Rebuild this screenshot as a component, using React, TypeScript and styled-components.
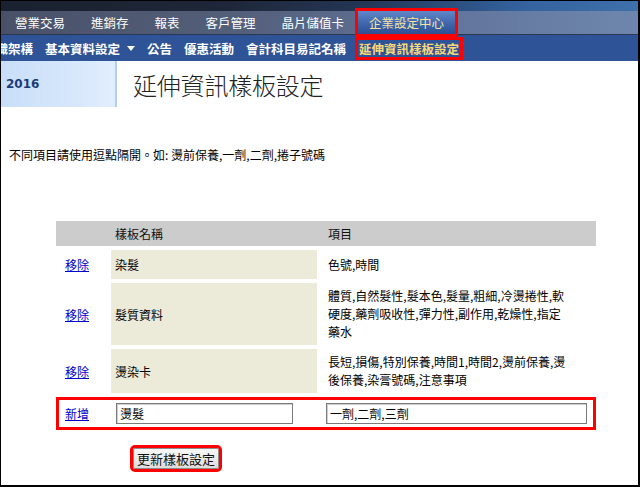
import styled, { createGlobalStyle } from "styled-components";

const GlobalStyle = createGlobalStyle`
  html, body {
    margin: 0;
    padding: 0;
    background: #fff;
  }
  body {
    font-family: "Noto Sans CJK TC", "Noto Sans", sans-serif;
    font-size: 12px;
    color: #000;
  }
`;

const mainMenu = ["營業交易", "進銷存", "報表", "客戶管理", "晶片儲值卡", "企業設定中心"];

const subMenu = [
  { label: "組織架構" },
  { label: "基本資料設定", caret: true },
  { label: "公告" },
  { label: "優惠活動" },
  { label: "會計科目易記名稱" },
  { label: "延伸資訊樣板設定", active: true },
];

const templates = [
  { name: "染髮", items: ["色號,時間"], height: 29 },
  {
    name: "髮質資料",
    items: [
      "體質,自然髮性,髮本色,髮量,粗細,冷燙捲性,軟",
      "硬度,藥劑吸收性,彈力性,副作用,乾燥性,指定",
      "藥水",
    ],
    height: 61,
  },
  {
    name: "燙染卡",
    items: ["長短,損傷,特別保養,時間1,時間2,燙前保養,燙", "後保養,染膏號碼,注意事項"],
    height: 44,
  },
];

const App = () => {
  return (
    <>
      <GlobalStyle />
      <Page>
        <TopStrip />
        <MainMenu>
          {mainMenu.map((m, i) => (
            <MenuItem key={m} $active={i === mainMenu.length - 1}>
              {m}
            </MenuItem>
          ))}
        </MainMenu>
        <SubMenu>
          {subMenu.map((s, i) => (
            <SubItem key={s.label} $active={s.active} $first={i === 0}>
              {s.label}
              {s.caret && (
                <Caret width="8" height="5" viewBox="0 0 8 5">
                  <polygon points="0,0 8,0 4,5" fill="#fff" />
                </Caret>
              )}
            </SubItem>
          ))}
        </SubMenu>

        <TitleRow>
          <YearBox>2016</YearBox>
          <Title>延伸資訊樣板設定</Title>
        </TitleRow>

        <Hint>不同項目請使用逗點隔開。如: 燙前保養,一劑,二劑,捲子號碼</Hint>

        <Table>
          <HeaderRow>
            <span />
            <HeadCell $pad={4}>樣板名稱</HeadCell>
            <HeadCell $pad={11}>項目</HeadCell>
          </HeaderRow>
          {templates.map((t) => (
            <Row key={t.name} $h={t.height}>
              <LinkCell>
                <TextLink href="#">移除</TextLink>
              </LinkCell>
              <NameCell>{t.name}</NameCell>
              <ItemsCell>
                <div>
                  {t.items.map((line, i) => (
                    <div key={i}>{line}</div>
                  ))}
                </div>
              </ItemsCell>
            </Row>
          ))}
          <NewRow>
            <LinkCell>
              <TextLink href="#">新增</TextLink>
            </LinkCell>
            <TextInput defaultValue="燙髮" $w={177} $ml={5} />
            <TextInput defaultValue="一劑,二劑,三劑" $w={261} $ml={9} />
          </NewRow>
        </Table>

        <ButtonRow>
          <UpdateButton type="button">更新樣板設定</UpdateButton>
        </ButtonRow>
      </Page>
    </>
  );
};

const Page = styled.div`
  width: 640px;
  height: 487px;
  box-sizing: border-box;
  border: 1px solid #000;
  border-right-width: 2px;
  border-bottom-width: 2px;
  overflow: hidden;
  background: #fff;
`;

const TopStrip = styled.div`
  height: 10px;
  background: linear-gradient(
    90deg,
    #1a2130 0%,
    #1e2739 35%,
    #243757 58%,
    #3463a0 82%,
    #3f70ab 100%
  );
`;

const MainMenu = styled.nav`
  display: flex;
  height: 23px;
  padding-left: 1px;
  border-bottom: 1px solid #2c3752;
  background: linear-gradient(
    90deg,
    #495168 0%,
    #535e78 35%,
    #61749a 68%,
    #6e86ad 100%
  );
`;

const MenuItem = styled.a<{ $active?: boolean }>`
  display: flex;
  align-items: center;
  padding: 0 13px;
  color: ${(p) => (p.$active ? "#f4e4a4" : "#fff")};
  font-size: 12.5px;
  white-space: nowrap;
  ${(p) =>
    p.$active &&
    `
    margin-left: 1px;
    padding: 0 11px;
    background: linear-gradient(180deg, #5e86c8 0%, #4169ad 50%, #2d4f94 100%);
    outline: 3px solid #ff0000;
  `}
`;

const SubMenu = styled.nav`
  display: flex;
  align-items: center;
  gap: 12px;
  height: 26px;
  background: #2e5396;
  white-space: nowrap;
`;

const SubItem = styled.a<{ $active?: boolean; $first?: boolean }>`
  display: inline-flex;
  align-items: center;
  height: 17px;
  font-size: 12.5px;
  font-weight: bold;
  color: ${(p) => (p.$active ? "#f6d77a" : "#fff")};
  margin-left: ${(p) => (p.$first ? "-18px" : "0")};
  ${(p) =>
    p.$active &&
    `
    padding: 0 1px;
    outline: 3px solid #ff0000;
  `}
`;

const Caret = styled.svg`
  margin-left: 7px;
  margin-top: 1px;
`;

const TitleRow = styled.div`
  display: flex;
  align-items: center;
  height: 46px;
`;

const YearBox = styled.div`
  box-sizing: border-box;
  width: 116px;
  height: 100%;
  display: flex;
  align-items: center;
  padding-left: 5px;
  border-right: 2px solid #b6cfee;
  background: linear-gradient(90deg, #c8def8 0%, #d6e7fb 60%, #e1eefd 100%);
  font-family: "DejaVu Sans", Verdana, sans-serif;
  font-weight: bold;
  font-size: 12px;
  color: #1b3a7c;
`;

const Title = styled.h1`
  margin: 0 0 0 16px;
  font-size: 24px;
  font-weight: 300;
  color: #222;
  letter-spacing: -0.2px;
`;

const Hint = styled.p`
  margin: 39px 0 0;
  padding-left: 8px;
  line-height: 18px;
  font-size: 12px;
`;

const Table = styled.div`
  display: flex;
  flex-direction: column;
  gap: 4px;
  width: 540px;
  margin: 57px 0 0 55px;
`;

const grid = `
  display: grid;
  grid-template-columns: 55px 206px 1fr;
`;

const HeaderRow = styled.div`
  ${grid}
  height: 25px;
  align-items: center;
  background: #cccccc;
`;

const HeadCell = styled.div<{ $pad: number }>`
  padding-left: ${(p) => p.$pad}px;
  color: #111;
`;

const Row = styled.div<{ $h: number }>`
  ${grid}
  min-height: ${(p) => p.$h}px;
`;

const LinkCell = styled.div`
  display: flex;
  align-items: center;
  padding-left: 9px;
`;

const TextLink = styled.a`
  color: #0000cc;
  text-decoration: underline;
`;

const NameCell = styled.div`
  display: flex;
  align-items: center;
  padding: 4px;
  background: #ecead9;
`;

const ItemsCell = styled.div`
  display: flex;
  align-items: center;
  padding: 4px 0 4px 11px;
  line-height: 18px;
`;

const NewRow = styled.div`
  ${grid}
  height: 33px;
  align-items: center;
  outline: 3px solid #ff0000;
  outline-offset: -3px;
`;

const TextInput = styled.input<{ $w: number; $ml: number }>`
  box-sizing: border-box;
  width: ${(p) => p.$w}px;
  height: 21px;
  margin-left: ${(p) => p.$ml}px;
  padding: 0 3px;
  border: 1px solid #7b7b7b;
  box-shadow: inset 1px 1px 0 #cfcfcf;
  font-family: "Noto Sans CJK TC", "Noto Sans", sans-serif;
  font-size: 12px;
  color: #000;
  background: #fff;
`;

const ButtonRow = styled.div`
  margin-top: 18px;
  padding-left: 132px;
`;

const UpdateButton = styled.button`
  height: 21px;
  padding: 0 3px;
  border: 1px solid #8c8c8c;
  border-radius: 2px;
  background: linear-gradient(180deg, #f8f8f8 0%, #ececec 50%, #dcdcdc 100%);
  font-family: "Noto Sans CJK TC", "Noto Sans", sans-serif;
  font-size: 13px;
  color: #111;
  outline: 3px solid #ff0000;
`;

export default App;
